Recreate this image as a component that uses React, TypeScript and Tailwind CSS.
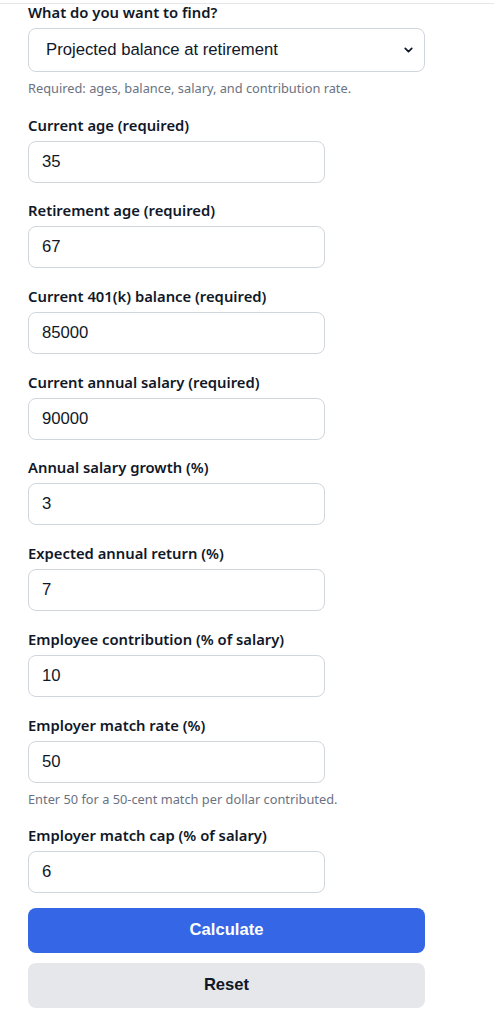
import { useState } from "react";
import { ChevronDown } from "lucide-react";

type Field = {
  id: string;
  label: string;
  value: string;
  hint?: string;
};

const FIELDS: Field[] = [
  { id: "currentAge", label: "Current age (required)", value: "35" },
  { id: "retirementAge", label: "Retirement age (required)", value: "67" },
  { id: "balance", label: "Current 401(k) balance (required)", value: "85000" },
  { id: "salary", label: "Current annual salary (required)", value: "90000" },
  { id: "salaryGrowth", label: "Annual salary growth (%)", value: "3" },
  { id: "expectedReturn", label: "Expected annual return (%)", value: "7" },
  { id: "contribution", label: "Employee contribution (% of salary)", value: "10" },
  {
    id: "matchRate",
    label: "Employer match rate (%)",
    value: "50",
    hint: "Enter 50 for a 50-cent match per dollar contributed.",
  },
  { id: "matchCap", label: "Employer match cap (% of salary)", value: "6" },
];

const labelFont = "font-['Noto_Sans','Open_Sans',sans-serif]";
const inputFont = "font-['Liberation_Sans',Arial,sans-serif]";

export default function App() {
  const [values, setValues] = useState<Record<string, string>>(() =>
    Object.fromEntries(FIELDS.map((f) => [f.id, f.value])),
  );
  const [mode, setMode] = useState("balance");

  return (
    <div className="min-h-screen bg-white">
      <div className="mt-[3px] border-t border-gray-200 px-[28px] pb-4">
        <label className={`block text-[14.8px] font-semibold leading-[17px] text-gray-900 ${labelFont}`}>
          What do you want to find?
        </label>
        <div className="relative mt-[7px] w-[397px]">
          <select
            value={mode}
            onChange={(e) => setMode(e.target.value)}
            className={`h-[44px] w-full appearance-none rounded-lg border border-gray-300 bg-white pl-[17px] text-[16.7px] text-gray-900 outline-none ${inputFont}`}
          >
            <option value="balance">Projected balance at retirement</option>
            <option value="contribution">Required contribution rate</option>
          </select>
          <ChevronDown
            className="pointer-events-none absolute right-[10px] top-1/2 h-[13px] w-[13px] -translate-y-1/2 text-gray-900"
            strokeWidth={3.2}
          />
        </div>
        <p className={`mt-[7px] text-[12.8px] leading-[18px] text-gray-500 ${labelFont}`}>
          Required: ages, balance, salary, and contribution rate.
        </p>

        {FIELDS.map((f) => (
          <div key={f.id} className="mt-[16.7px]">
            <label
              htmlFor={f.id}
              className={`block text-[14.8px] font-semibold leading-[22px] text-gray-900 ${labelFont}`}
            >
              {f.label}
            </label>
            <input
              id={f.id}
              value={values[f.id]}
              onChange={(e) => setValues((v) => ({ ...v, [f.id]: e.target.value }))}
              className={`mt-[5px] block h-[42px] w-[297px] rounded-lg border border-gray-300 bg-white px-[13px] text-[16.7px] text-gray-900 outline-none ${inputFont}`}
            />
            {f.hint && (
              <p className={`mt-[7px] text-[12.8px] leading-[18px] text-gray-500 ${labelFont}`}>{f.hint}</p>
            )}
          </div>
        ))}

        <button
          type="button"
          className={`mt-[15px] block h-[45px] w-[397px] rounded-lg bg-[#3466e6] text-[16.6px] font-bold text-white ${inputFont}`}
        >
          Calculate
        </button>
        <button
          type="button"
          className={`mt-[10px] block h-[45px] w-[397px] rounded-lg bg-gray-200 text-[16.6px] font-bold text-gray-900 ${inputFont}`}
        >
          Reset
        </button>
      </div>
    </div>
  );
}
